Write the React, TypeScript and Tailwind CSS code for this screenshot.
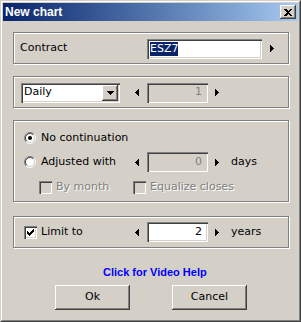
import React from 'react';

const sunken =
  'shadow-[inset_1px_1px_0_#808080,inset_2px_2px_0_#404040,inset_-1px_-1px_0_#ffffff,inset_-2px_-2px_0_#d4d0c8]';
const raised =
  'shadow-[inset_-1px_-1px_0_#404040,inset_1px_1px_0_#ffffff,inset_-2px_-2px_0_#808080,inset_2px_2px_0_#d4d0c8]';
const group =
  'border border-[#808080] shadow-[inset_1px_1px_0_#ffffff,1px_1px_0_#ffffff]';
const disabledText = 'text-[#808080] [text-shadow:1px_1px_0_#ffffff]';

function ArrowLeft() {
  return (
    <svg width="4" height="7" viewBox="0 0 4 7" shapeRendering="crispEdges">
      <rect x="3" y="0" width="1" height="7" fill="#000" />
      <rect x="2" y="1" width="1" height="5" fill="#000" />
      <rect x="1" y="2" width="1" height="3" fill="#000" />
      <rect x="0" y="3" width="1" height="1" fill="#000" />
    </svg>
  );
}

function ArrowRight() {
  return (
    <svg width="4" height="7" viewBox="0 0 4 7" shapeRendering="crispEdges">
      <rect x="0" y="0" width="1" height="7" fill="#000" />
      <rect x="1" y="1" width="1" height="5" fill="#000" />
      <rect x="2" y="2" width="1" height="3" fill="#000" />
      <rect x="3" y="3" width="1" height="1" fill="#000" />
    </svg>
  );
}

function ArrowDown() {
  return (
    <svg width="7" height="4" viewBox="0 0 7 4" shapeRendering="crispEdges">
      <rect x="0" y="0" width="7" height="1" fill="#000" />
      <rect x="1" y="1" width="5" height="1" fill="#000" />
      <rect x="2" y="2" width="3" height="1" fill="#000" />
      <rect x="3" y="3" width="1" height="1" fill="#000" />
    </svg>
  );
}

function Radio({ checked }: { checked?: boolean }) {
  return (
    <svg width="12" height="12" viewBox="0 0 12 12" className="shrink-0">
      <circle cx="6" cy="6" r="4.5" fill="#ffffff" />
      <path d="M2.1 9.9 A5.5 5.5 0 0 1 9.9 2.1" stroke="#808080" strokeWidth="1" fill="none" />
      <path d="M9.9 2.1 A5.5 5.5 0 0 1 2.1 9.9" stroke="#ffffff" strokeWidth="1" fill="none" />
      <path d="M2.8 9.2 A4.5 4.5 0 0 1 9.2 2.8" stroke="#404040" strokeWidth="1" fill="none" />
      <path d="M9.2 2.8 A4.5 4.5 0 0 1 2.8 9.2" stroke="#d4d0c8" strokeWidth="1" fill="none" />
      {checked && <circle cx="6" cy="6" r="2" fill="#000" />}
    </svg>
  );
}

function Check({ checked, disabled }: { checked?: boolean; disabled?: boolean }) {
  return (
    <div className={`w-[13px] h-[13px] shrink-0 relative ${sunken} ${disabled ? 'bg-[#d4d0c8]' : 'bg-white'}`}>
      {checked && (
        <svg width="7" height="7" viewBox="0 0 7 7" shapeRendering="crispEdges" className="absolute left-[3px] top-[3px]">
          <rect x="0" y="2" width="1" height="3" fill="#000" />
          <rect x="1" y="3" width="1" height="3" fill="#000" />
          <rect x="2" y="4" width="1" height="3" fill="#000" />
          <rect x="3" y="3" width="1" height="3" fill="#000" />
          <rect x="4" y="2" width="1" height="3" fill="#000" />
          <rect x="5" y="1" width="1" height="3" fill="#000" />
          <rect x="6" y="0" width="1" height="3" fill="#000" />
        </svg>
      )}
    </div>
  );
}

function Spinner({ value, disabled, unit }: { value: string; disabled?: boolean; unit?: string }) {
  return (
    <div className="flex items-center">
      <ArrowLeft />
      <div
        className={`ml-[8px] w-[61px] h-[20px] flex items-center justify-end pr-[6px] ${sunken} ${
          disabled ? 'bg-[#d4d0c8] text-[#808080]' : 'bg-white text-black'
        }`}
      >
        {value}
      </div>
      <div className="ml-[7px]">
        <ArrowRight />
      </div>
      {unit && <span className="ml-[12px]">{unit}</span>}
    </div>
  );
}

export default function App() {
  return (
    <div
      className="w-[301px] h-[322px] bg-[#d4d0c8] border border-t-[#d4d0c8] border-l-[#d4d0c8] border-b-[#404040] border-r-[#404040] text-[11px] text-black"
      style={{ fontFamily: '"DejaVu Sans", sans-serif' }}
    >
      <div className="h-full border border-t-white border-l-white border-b-[#808080] border-r-[#808080] p-px flex flex-col">
        {/* title bar */}
        <div className="h-[18px] flex items-center justify-between bg-linear-to-r from-[#0a246a] to-[#a6caf0] pl-[2px] pr-[2px]">
          <span className="text-white font-bold text-[12px] font-['Liberation_Sans',sans-serif]">New chart</span>
          <div className={`w-[16px] h-[14px] bg-[#d4d0c8] flex items-center justify-center ${raised}`}>
            <svg width="8" height="7" viewBox="0 0 8 7" shapeRendering="crispEdges">
              <path d="M0 0 L2 0 L4 2 L6 0 L8 0 L5 3.5 L8 7 L6 7 L4 5 L2 7 L0 7 L3 3.5 Z" fill="#000" />
            </svg>
          </div>
        </div>

        {/* contract */}
        <div className={`ml-[10px] mt-[11px] w-[276px] h-[32px] flex items-center pl-[6px] pt-px ${group}`}>
          <span className="w-[127px]">Contract</span>
          <div className={`w-[115px] h-[20px] bg-white flex items-center pl-[3px] ${sunken}`}>
            <span className="bg-[#0a246a] text-white leading-[14px]">ESZ7</span>
          </div>
          <div className="ml-[8px]">
            <ArrowRight />
          </div>
        </div>

        {/* period */}
        <div className={`ml-[10px] mt-[12px] w-[276px] h-[32px] flex items-center pl-[7px] pt-px ${group}`}>
          <div className={`w-[99px] h-[20px] bg-white flex items-center justify-between pl-[3px] pr-[2px] ${sunken}`}>
            <span>Daily</span>
            <div className={`w-[16px] h-[16px] bg-[#d4d0c8] flex items-center justify-center ${raised}`}>
              <ArrowDown />
            </div>
          </div>
          <div className="ml-[15px]">
            <Spinner value="1" disabled />
          </div>
        </div>

        {/* continuation */}
        <div className={`ml-[10px] mt-[12px] w-[276px] h-[82px] flex flex-col pt-[7px] ${group}`}>
          <div className="h-[20px] flex items-center pl-[10px]">
            <Radio checked />
            <span className="ml-[5px]">No continuation</span>
          </div>
          <div className="h-[20px] mt-[4px] flex items-center">
            <div className="w-[121px] flex items-center pl-[10px]">
              <Radio />
              <span className="ml-[5px]">Adjusted with</span>
            </div>
            <Spinner value="0" disabled unit="days" />
          </div>
          <div className="h-[20px] mt-[5px] flex items-center pl-[25px]">
            <div className="w-[94px] flex items-center">
              <Check disabled />
              <span className={`ml-[4px] ${disabledText}`}>By month</span>
            </div>
            <Check disabled />
            <span className={`ml-[4px] ${disabledText}`}>Equalize closes</span>
          </div>
        </div>

        {/* limit */}
        <div className={`ml-[10px] mt-[14px] w-[276px] h-[32px] flex items-center ${group}`}>
          <div className="w-[121px] flex items-center pl-[10px]">
            <Check checked />
            <span className="ml-[4px]">Limit to</span>
          </div>
          <Spinner value="2" unit="years" />
        </div>

        {/* help link */}
        <div className="mt-[17px] h-[14px] flex items-center pl-[100px]">
          <span className="text-[#0000ff] font-bold text-[11px] leading-[14px] font-['Liberation_Sans',sans-serif]">
            Click for Video Help
          </span>
        </div>

        {/* buttons */}
        <div className="mt-[6px] flex pl-[52px] gap-[42px]">
          <button className={`w-[75px] h-[25px] bg-[#d4d0c8] ${raised}`}>Ok</button>
          <button className={`w-[75px] h-[25px] bg-[#d4d0c8] ${raised}`}>Cancel</button>
        </div>
      </div>
    </div>
  );
}
